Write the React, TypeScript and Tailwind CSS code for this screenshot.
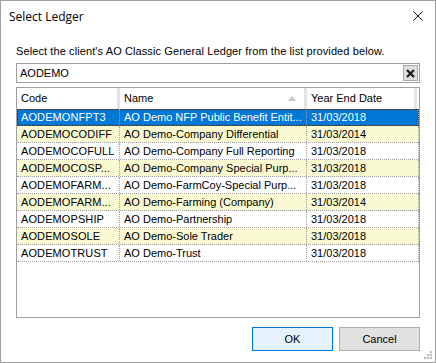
import React from "react";

// ===============================Data==============================
type Ledger = { code: string; name: string; date: string };

const LEDGERS: Ledger[] = [
  { code: "AODEMONFPT3", name: "AO Demo NFP Public Benefit Entit...", date: "31/03/2018" },
  { code: "AODEMOCODIFF", name: "AO Demo-Company Differential", date: "31/03/2014" },
  { code: "AODEMOCOFULL", name: "AO Demo-Company Full Reporting", date: "31/03/2018" },
  { code: "AODEMOCOSP...", name: "AO Demo-Company Special Purp...", date: "31/03/2018" },
  { code: "AODEMOFARM...", name: "AO Demo-FarmCoy-Special Purp...", date: "31/03/2018" },
  { code: "AODEMOFARM...", name: "AO Demo-Farming (Company)", date: "31/03/2014" },
  { code: "AODEMOPSHIP", name: "AO Demo-Partnership", date: "31/03/2018" },
  { code: "AODEMOSOLE", name: "AO Demo-Sole Trader", date: "31/03/2018" },
  { code: "AODEMOTRUST", name: "AO Demo-Trust", date: "31/03/2018" },
];

// ===============================Component==============================
const App = () => {
  return (
    <div
      className="relative w-[436px] h-[363px] bg-white border border-[#a0a0a0] flex flex-col text-black"
      style={{ fontFamily: '"Liberation Sans", Arial, sans-serif' }}
    >
      {/* ===============================Title Bar============================== */}
      <div className="h-[31px] flex items-center justify-between pl-[8px] pr-[12px]">
        <span className="text-[12px]" style={{ fontFamily: '"Open Sans", sans-serif' }}>
          Select Ledger
        </span>
        <svg width="10" height="10" viewBox="0 0 10 10" className="mt-[-1px]">
          <path d="M0.5 0.5 L9.5 9.5 M9.5 0.5 L0.5 9.5" stroke="#111" strokeWidth="1" />
        </svg>
      </div>

      <div className="px-[15px] flex flex-col">
        {/* ===============================Label============================== */}
        <p className="mt-[13px] text-[11px] leading-[13px] tracking-[0.1px] whitespace-nowrap">
          Select the client's AO Classic General Ledger from the list provided below.
        </p>

        {/* ===============================Search Box============================== */}
        <div className="mt-[5px] h-[20px] border border-[#a0a0a0] flex items-center justify-between pl-[3px] pr-[1px]">
          <span className="text-[11px] leading-[13px]">AODEMO</span>
          <div className="w-[15px] h-[16px] border border-[#a8a8a8] bg-[#dedede] flex items-center justify-center">
            <svg width="9" height="9" viewBox="0 0 9 9">
              <path d="M1 1 L8 8 M8 1 L1 8" stroke="#1a1a1a" strokeWidth="2.2" />
            </svg>
          </div>
        </div>

        {/* ===============================Grid============================== */}
        <div className="mt-[4px] h-[231px] border border-[#a0a0a0] text-[11px] leading-[13px] flex flex-col">
          <div className="h-[21px] flex bg-white">
            <div className="w-[103px] flex items-center pl-[4px] border-r-[3px] border-[#e4e4e4]">Code</div>
            <div className="w-[187px] flex items-center justify-between pl-[4px] pr-[8px] border-r-[3px] border-[#e4e4e4]">
              <span>Name</span>
              <svg width="8" height="5" viewBox="0 0 8 5">
                <path d="M0 5 L4 0 L8 5 Z" fill="#c8c8c8" />
              </svg>
            </div>
            <div className="w-[110px] flex items-center pl-[4px] border-r-[3px] border-[#e4e4e4]">Year End Date</div>
          </div>

          {LEDGERS.map((row, i) => {
            const selected = i === 0;
            const bg = selected ? "bg-[#0078d7] text-white" : i % 2 === 1 ? "bg-[#fafad2]" : "bg-white";
            return (
              <div
                key={i}
                className={`h-[17px] w-[402px] flex border-b border-dotted border-[#a0a0a0] ${bg} ${
                  selected ? "outline-1 outline-dotted outline-[#333] -outline-offset-1" : ""
                }`}
              >
                <div className="w-[103px] flex items-center pl-[4px] whitespace-nowrap tracking-[0.1px] border-r border-dotted border-[#a0a0a0]">
                  {row.code}
                </div>
                <div className="w-[187px] flex items-center pl-[4px] whitespace-nowrap border-r border-dotted border-[#a0a0a0]">
                  {row.name}
                </div>
                <div className="w-[112px] flex items-center pl-[4px] whitespace-nowrap border-r border-dotted border-[#a0a0a0]">
                  {row.date}
                </div>
              </div>
            );
          })}
        </div>

        {/* ===============================Buttons============================== */}
        <div className="mt-[9px] flex justify-end gap-[6px] text-[11px]">
          <button className="w-[81px] h-[24px] border border-[#0078d7] bg-[#e5f1fb]">OK</button>
          <button className="w-[81px] h-[24px] border border-[#adadad] bg-[#e1e1e1]">Cancel</button>
        </div>
      </div>

      {/* ===============================Size Grip============================== */}
      <svg width="9" height="9" viewBox="0 0 9 9" className="absolute right-[2px] bottom-[2px]">
        <rect x="6" y="0" width="2" height="2" fill="#b8b8b8" />
        <rect x="3" y="3" width="2" height="2" fill="#b8b8b8" />
        <rect x="6" y="3" width="2" height="2" fill="#b8b8b8" />
        <rect x="0" y="6" width="2" height="2" fill="#b8b8b8" />
        <rect x="3" y="6" width="2" height="2" fill="#b8b8b8" />
        <rect x="6" y="6" width="2" height="2" fill="#b8b8b8" />
      </svg>
    </div>
  );
};

export default App;
